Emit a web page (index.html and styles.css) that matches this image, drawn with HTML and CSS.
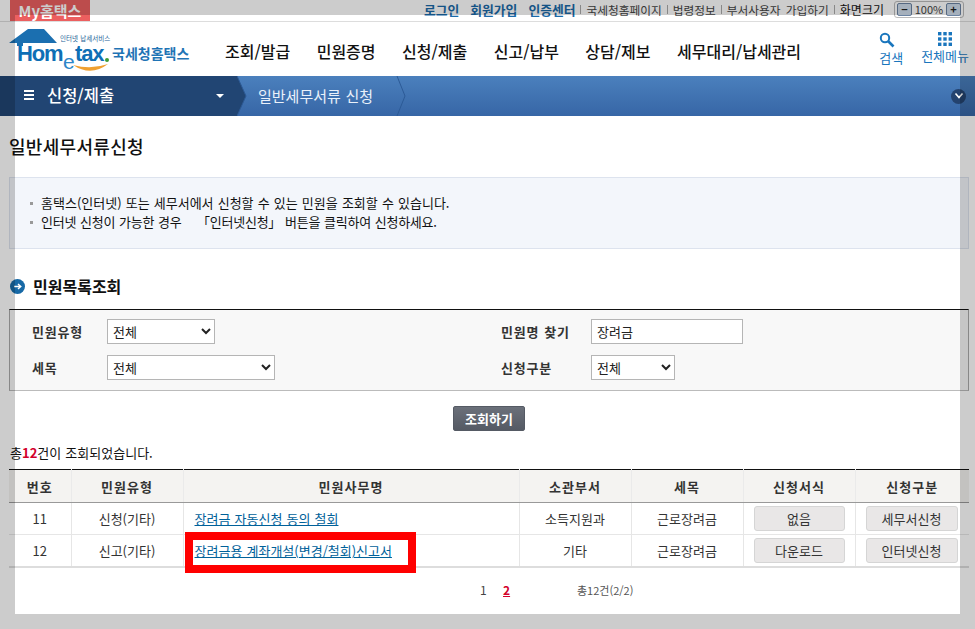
FILE: index.html
```html
<!DOCTYPE html>
<html lang="ko">
<head>
    <meta charset="UTF-8">
    <title>일반세무서류신청</title>
    <link rel="stylesheet" href="styles.css">
</head>
<body>
    <div class="top-bar">
        <div class="my-tab">My홈택스</div>
        <div class="top-links">
            <a class="top-strong">로그인</a>
            <a class="top-strong">회원가입</a>
            <a class="top-strong">인증센터</a>
            <span class="top-sep"></span>
            <a>국세청홈페이지</a>
            <span class="top-sep"></span>
            <a>법령정보</a>
            <span class="top-sep"></span>
            <a class="top-wide">부서사용자 가입하기</a>
            <span class="top-sep"></span>
            <a class="top-dark">화면크기</a>
            <div class="zoom-box">
                <span class="zoom-btn">−</span>
                <span class="zoom-value">100%</span>
                <span class="zoom-btn">+</span>
            </div>
        </div>
    </div>

    <div class="header">
        <svg class="logo" width="182" height="46" viewBox="0 0 182 46">
            <path d="M0 16 L19 2 H35 L48 16 H14 V19 H8 V16 Z" fill="#1b6fb0"/>
            <text x="51" y="14" class="logo-small">인터넷 납세서비스</text>
            <text x="8" y="34" class="logo-main">Hom</text>
            <text x="54" y="42" class="logo-e">e</text>
            <text x="66" y="34" class="logo-main">tax</text>
            <circle cx="98" cy="33" r="2" fill="#3f9c35"/>
            <path d="M64 38 Q82 50 99 37 Q82 43 64 38 Z" fill="#f0a030"/>
            <text x="103" y="32" class="logo-name">국세청홈택스</text>
        </svg>
        <div class="main-nav">
            <a>조회/발급</a>
            <a>민원증명</a>
            <a>신청/제출</a>
            <a>신고/납부</a>
            <a>상담/제보</a>
            <a>세무대리/납세관리</a>
        </div>
        <div class="header-tools">
            <div class="tool">
                <svg class="tool-search" width="16" height="16" viewBox="0 0 16 16">
                    <circle cx="6" cy="6" r="4.2" fill="none" stroke="#1a76bd" stroke-width="2"/>
                    <path d="M9 9 L14.5 14.5" stroke="#1a76bd" stroke-width="2.6"/>
                </svg>
                <span>검색</span>
            </div>
            <div class="tool">
                <svg width="14" height="14" viewBox="0 0 14 14" fill="#1a76bd">
                    <rect x="0" y="0" width="3.4" height="3.4"/><rect x="5.3" y="0" width="3.4" height="3.4"/><rect x="10.6" y="0" width="3.4" height="3.4"/>
                    <rect x="0" y="5.3" width="3.4" height="3.4"/><rect x="5.3" y="5.3" width="3.4" height="3.4"/><rect x="10.6" y="5.3" width="3.4" height="3.4"/>
                    <rect x="0" y="10.6" width="3.4" height="3.4"/><rect x="5.3" y="10.6" width="3.4" height="3.4"/><rect x="10.6" y="10.6" width="3.4" height="3.4"/>
                </svg>
                <span>전체메뉴</span>
            </div>
        </div>
    </div>

    <div class="crumb-bar">
        <div class="crumb-first">
            <div class="crumb-menu"><i></i><i></i><i></i></div>
            <span class="crumb-title">신청/제출</span>
            <span class="crumb-caret"></span>
        </div>
        <svg class="crumb-tip" width="10" height="40" viewBox="0 0 10 40">
            <path d="M0 0 L9 20 L0 40 Z" fill="#214573"/>
            <path d="M0 0 L9 20 L0 40" fill="none" stroke="#2d5a94"/>
        </svg>
        <span class="crumb-second">일반세무서류 신청</span>
        <svg class="crumb-arrow" width="10" height="40" viewBox="0 0 10 40">
            <path d="M1 0 L9 20 L1 40" fill="none" stroke="#2c5a96"/>
        </svg>
        <span class="crumb-more">
            <svg width="10" height="8" viewBox="0 0 10 8"><path d="M1.5 1.5 L5 5.5 L8.5 1.5" fill="none" stroke="#fff" stroke-width="1.6"/></svg>
        </span>
    </div>

    <div class="content">
        <h1 class="page-title">일반세무서류신청</h1>

        <ul class="info-box">
            <li>홈택스(인터넷) 또는 세무서에서 신청할 수 있는 민원을 조회할 수 있습니다.</li>
            <li class="tight">인터넷 신청이 가능한 경우 &nbsp; &nbsp;「인터넷신청」 버튼을 클릭하여 신청하세요.</li>
        </ul>

        <h2 class="section-title">
            <svg width="15" height="15" viewBox="0 0 15 15">
                <circle cx="7.5" cy="7.5" r="7.5" fill="#1769a6"/>
                <path d="M4 7.5 H10.5 M8 5 L10.8 7.5 L8 10" fill="none" stroke="#fff" stroke-width="1.4"/>
            </svg>
            민원목록조회
        </h2>

        <div class="search-box">
            <label>민원유형</label>
            <div class="field"><select class="sel-type"><option>전체</option></select></div>
            <label>민원명 찾기</label>
            <div class="field"><input class="search-input" type="text" value="장려금"></div>
            <label>세목</label>
            <div class="field"><select class="sel-tax"><option>전체</option></select></div>
            <label>신청구분</label>
            <div class="field"><select class="sel-apply"><option>전체</option></select></div>
        </div>

        <div class="search-action"><button class="search-btn">조회하기</button></div>

        <p class="result-count">총<b>12</b>건이 조회되었습니다.</p>

        <table class="result-table">
            <colgroup>
                <col class="c-no"><col class="c-type"><col class="c-name"><col class="c-dept"><col class="c-tax"><col class="c-form"><col class="c-apply">
            </colgroup>
            <thead>
                <tr><th>번호</th><th>민원유형</th><th>민원사무명</th><th>소관부서</th><th>세목</th><th>신청서식</th><th>신청구분</th></tr>
            </thead>
            <tbody>
                <tr>
                    <td>11</td><td>신청(기타)</td>
                    <td class="left"><a href="#">장려금 자동신청 동의 철회</a></td>
                    <td>소득지원과</td><td>근로장려금</td>
                    <td><button class="row-btn">없음</button></td>
                    <td><button class="row-btn">세무서신청</button></td>
                </tr>
                <tr>
                    <td>12</td><td>신고(기타)</td>
                    <td class="left"><a href="#">장려금용 계좌개설(변경/철회)신고서</a></td>
                    <td>기타</td><td>근로장려금</td>
                    <td><button class="row-btn">다운로드</button></td>
                    <td><button class="row-btn">인터넷신청</button></td>
                </tr>
            </tbody>
        </table>

        <div class="pager">
            <span class="page-num">1</span>
            <a class="page-num current">2</a>
            <span class="page-total">총12건(2/2)</span>
        </div>
    </div>

    <!-- 캡처 위에 덧그린 표시 -->
    <div class="red-mark"></div>
    <div class="dim-frame"></div>
</body>
</html>
```

FILE: styles.css
```css
* {
    margin: 0;
    padding: 0;
    box-sizing: border-box;
}

html, body {
    height: 629px;
    overflow: hidden;
}

body {
    font-family: "Noto Sans CJK KR", "Noto Sans", sans-serif;
    font-size: 13px;
    word-spacing: 0.5px;
    color: #222;
    background: #fff;
    position: relative;
}

/* top bar */
.top-bar {
    display: flex;
    justify-content: space-between;
    height: 22px;
    border-bottom: 1px solid #ddd;
    padding: 0 11px 0 10px;
}

.my-tab {
    width: 80px;
    height: 21px;
    background: #ec5f5f;
    color: #fff;
    font-size: 15px;
    font-weight: 700;
    line-height: 21px;
    text-align: center;
}

.top-links {
    display: flex;
    align-items: center;
    height: 18px;
    font-size: 11.7px;
    color: #444;
}

.top-links a {
    margin-right: 11px;
}

.top-links .top-dark {
    color: #111;
    font-size: 12px;
    margin-right: 10px;
}

.top-strong {
    color: #1b6aa8;
    font-weight: 700;
    font-size: 12.8px;
}

.top-wide {
    word-spacing: 2px;
}

.top-sep {
    width: 1px;
    height: 9px;
    background: #aaa;
    margin-right: 5px;
    margin-left: -6px;
}

.zoom-box {
    display: flex;
    align-items: center;
    justify-content: space-between;
    width: 70px;
    height: 17px;
    border: 1px solid #bbb;
    border-radius: 3px;
    padding: 0 2px;
    font-size: 11px;
}

.zoom-btn {
    width: 15px;
    height: 13px;
    line-height: 11px;
    text-align: center;
    background: #cfdcec;
    border: 1px solid #6c84a3;
    border-radius: 2px;
    color: #222;
    font-weight: 700;
}

/* header */
.header {
    display: flex;
    align-items: center;
    height: 54px;
    padding-left: 9px;
}

.logo {
    flex: none;
    align-self: flex-start;
    margin-top: 5px;
}

.logo-small {
    font-size: 6.5px;
    fill: #1b5f98;
}

.logo-main {
    font-family: "Liberation Sans", sans-serif;
    font-size: 22px;
    font-weight: 700;
    fill: #0f6fb5;
    letter-spacing: -1.2px;
}

.logo-e {
    font-family: "Liberation Sans", sans-serif;
    font-size: 21px;
    fill: #2d86c8;
}

.logo-name {
    font-size: 14px;
    font-weight: 700;
    fill: #1f74b5;
}

.main-nav {
    display: flex;
    gap: 26.5px;
    margin-left: 34px;
    padding-top: 4px;
    font-size: 16px;
    font-weight: 500;
    color: #111;
    flex: 1;
}

.header-tools {
    display: flex;
    align-items: flex-start;
    gap: 18px;
    padding-right: 6px;
    font-size: 13px;
    color: #1a76bd;
}

.tool {
    display: flex;
    flex-direction: column;
    align-items: center;
    line-height: 20px;
}

.tool svg {
    margin-top: 1px;
}

.tool-search {
    align-self: flex-start;
}

/* breadcrumb */
.crumb-bar {
    display: flex;
    align-items: center;
    height: 40px;
    background: linear-gradient(#4b80bd, #3766a6);
    color: #fff;
}

.crumb-first {
    display: flex;
    align-items: center;
    width: 237px;
    height: 40px;
    background: #214573;
    padding-left: 24px;
}

.crumb-menu {
    width: 10px;
    margin-right: 13px;
}

.crumb-menu i {
    display: block;
    height: 2px;
    background: #fff;
    margin-bottom: 2px;
}

.crumb-title {
    font-size: 16.5px;
    font-weight: 500;
    flex: 1;
    padding-bottom: 2px;
}

.crumb-caret {
    width: 0;
    height: 0;
    border-left: 4px solid transparent;
    border-right: 4px solid transparent;
    border-top: 4px solid #fff;
    margin-right: 13px;
}

.crumb-tip {
    flex: none;
}

.crumb-second {
    margin-left: 11px;
    width: 138px;
    padding-bottom: 2px;
    font-size: 15px;
    color: #eaf1fa;
}

.crumb-arrow {
    flex: none;
}

.crumb-more {
    display: flex;
    align-items: center;
    justify-content: center;
    width: 15px;
    height: 15px;
    border-radius: 50%;
    background: #24436f;
    margin-left: auto;
    margin-right: 9px;
}

/* content */
.content {
    padding: 19px 6px 0 9px;
}

.page-title {
    font-size: 18px;
    font-weight: 500;
    letter-spacing: 0.3px;
    line-height: 23px;
    color: #111;
    margin-bottom: 19px;
}

.info-box {
    list-style: none;
    height: 72px;
    background: #f3f6fb;
    border: 1px solid #dde3ee;
    padding: 15px 0 0 31px;
    line-height: 19px;
    color: #111;
}

.info-box li {
    position: relative;
}

.info-box li.tight {
    letter-spacing: -0.25px;
}

.info-box li::before {
    content: "";
    position: absolute;
    left: -11px;
    top: 9px;
    width: 3px;
    height: 3px;
    background: #999;
}

.section-title {
    display: flex;
    align-items: center;
    gap: 8px;
    height: 20px;
    margin-top: 27px;
    margin-bottom: 13px;
    padding-left: 1px;
    font-size: 16px;
    font-weight: 700;
    color: #111;
}

.search-box {
    display: grid;
    grid-template-columns: 75px 394px 90px 1fr;
    grid-auto-rows: 25px;
    row-gap: 11px;
    align-items: center;
    height: 82px;
    background: #f8f8f8;
    border: 1px solid #aaa;
    border-top-color: #111;
    border-bottom-color: #bbb;
    padding: 9px 0 0 22px;
}

.search-box label {
    font-weight: 700;
    letter-spacing: 0.8px;
    color: #333;
}

.field {
    display: flex;
    height: 25px;
}

.field select,
.search-input {
    height: 25px;
    background: #fff;
    border: 1px solid #b5b5b5;
    font-family: inherit;
    font-size: 13px;
    color: #222;
}

.field select {
    padding-left: 1px;
}

.search-input {
    padding-left: 5px;
    width: 152px;
}

.sel-type {
    width: 108px;
}

.sel-tax {
    width: 168px;
}

.sel-apply {
    width: 84px;
}

.search-action {
    display: flex;
    justify-content: center;
    margin-top: 15px;
}

.search-btn {
    width: 72px;
    height: 25px;
    border: 1px solid #555a64;
    border-radius: 2px;
    background: linear-gradient(#6b707a, #555a64);
    color: #fff;
    font-family: inherit;
    font-size: 13px;
    font-weight: 700;
}

.result-count {
    margin-top: 14px;
    margin-bottom: 8px;
    height: 16px;
    line-height: 16px;
    padding-left: 1px;
    color: #111;
}

.result-count b {
    color: #d3002b;
}

.result-table {
    width: 960px;
    border-collapse: collapse;
    table-layout: fixed;
    border-top: 1px solid #111;
    border-bottom: 2px solid #ddd;
}

.c-no { width: 62px; }
.c-type { width: 112px; }
.c-name { width: 336px; }
.c-dept { width: 112px; }
.c-tax { width: 112px; }
.c-form { width: 112px; }
.c-apply { width: 114px; }

.result-table th {
    height: 33px;
    background: #f4f3f1;
    border-right: 1px solid #eaeaea;
    border-bottom: 1px solid #999;
    font-weight: 700;
    letter-spacing: 1px;
    color: #333;
}

.result-table td {
    height: 32px;
    text-align: center;
    border-right: 1px solid #e6e6e6;
    border-bottom: 1px solid #e6e6e6;
    color: #333;
}

.result-table th:last-child,
.result-table td:last-child {
    border-right: none;
}

.result-table tr:last-child td {
    border-bottom: none;
}

.result-table td.left {
    text-align: left;
    padding-left: 11px;
}

.result-table a {
    color: #00619a;
}

.row-btn {
    display: block;
    width: 91px;
    height: 25px;
    margin-left: 10px;
    background: #e9e7e7;
    border: 1px solid #d5d5d5;
    border-radius: 3px;
    font-family: inherit;
    font-size: 13px;
    color: #333;
}

.result-table td:last-child .row-btn {
    width: 92px;
}

/* pager */
.pager {
    display: flex;
    align-items: center;
    height: 44px;
    padding-left: 471px;
}

.page-num {
    width: 7px;
    font-size: 12px;
    color: #444;
}

.page-num.current {
    margin-left: 16px;
    color: #d3002b;
    font-weight: 700;
    text-decoration: underline;
}

.page-total {
    margin-left: 67px;
    font-size: 11px;
    color: #555;
}

/* overlays */
.red-mark {
    position: absolute;
    left: 185px;
    top: 532px;
    width: 231px;
    height: 41px;
    border: 8px solid #f00;
}

.dim-frame {
    position: absolute;
    left: 0;
    top: 0;
    width: 975px;
    height: 629px;
    border: 15px solid rgba(0, 0, 0, 0.2);
    pointer-events: none;
}
```
